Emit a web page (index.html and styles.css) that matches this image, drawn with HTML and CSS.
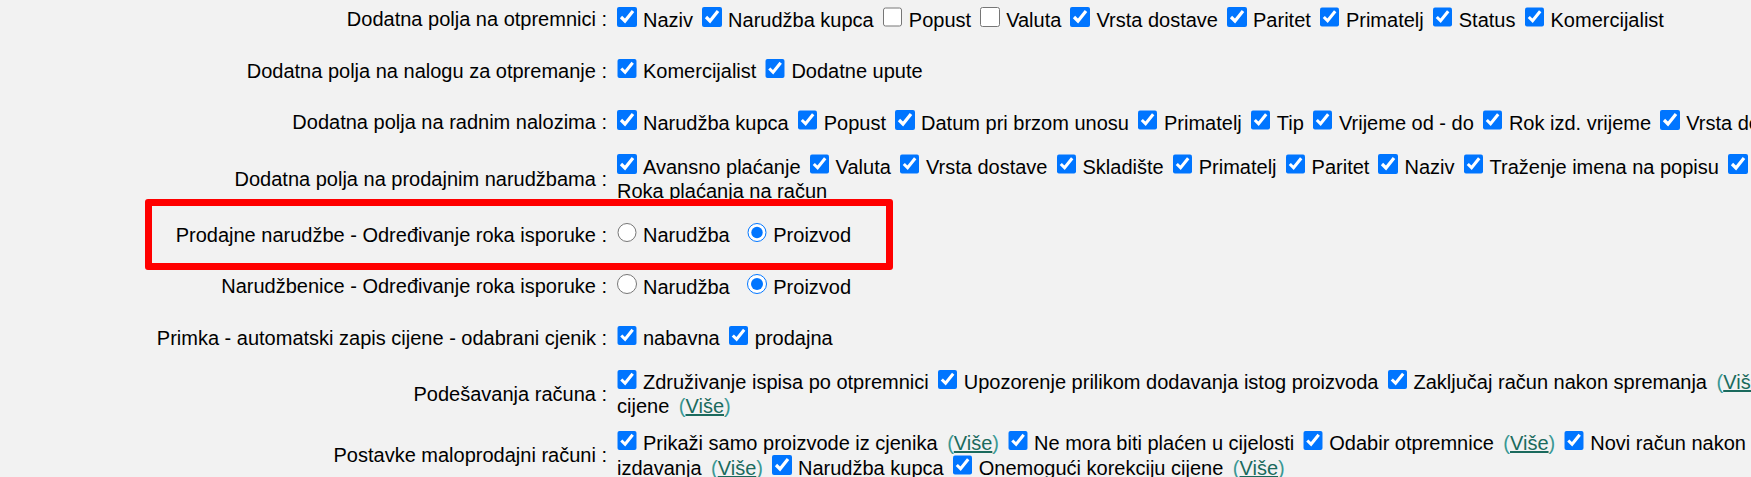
FILE: index.html
```html
<!DOCTYPE html>
<html lang="hr">
<head>
  <meta charset="UTF-8">
  <title>Postavke dokumenata</title>
  <link rel="stylesheet" href="styles.css">
</head>
<body>

  <div class="settings">

    <div class="row">
      <div class="lbl">Dodatna polja na otpremnici :</div>
      <div class="val">
        <label class="opt"><input type="checkbox" checked>Naziv</label>
        <label class="opt"><input type="checkbox" checked>Narudžba kupca</label>
        <label class="opt"><input type="checkbox">Popust</label>
        <label class="opt"><input type="checkbox">Valuta</label>
        <label class="opt"><input type="checkbox" checked>Vrsta dostave</label>
        <label class="opt"><input type="checkbox" checked>Paritet</label>
        <label class="opt"><input type="checkbox" checked>Primatelj</label>
        <label class="opt"><input type="checkbox" checked>Status</label>
        <label class="opt"><input type="checkbox" checked>Komercijalist</label>
      </div>
    </div>

    <div class="row">
      <div class="lbl">Dodatna polja na nalogu za otpremanje :</div>
      <div class="val">
        <label class="opt"><input type="checkbox" checked>Komercijalist</label>
        <label class="opt"><input type="checkbox" checked>Dodatne upute</label>
      </div>
    </div>

    <div class="row">
      <div class="lbl">Dodatna polja na radnim nalozima :</div>
      <div class="val">
        <label class="opt"><input type="checkbox" checked>Narudžba kupca</label>
        <label class="opt"><input type="checkbox" checked>Popust</label>
        <label class="opt"><input type="checkbox" checked>Datum pri brzom unosu</label>
        <label class="opt"><input type="checkbox" checked>Primatelj</label>
        <label class="opt"><input type="checkbox" checked>Tip</label>
        <label class="opt"><input type="checkbox" checked>Vrijeme od - do</label>
        <label class="opt"><input type="checkbox" checked>Rok izd. vrijeme</label>
        <label class="opt"><input type="checkbox" checked>Vrsta dostave</label>
      </div>
    </div>

    <div class="row">
      <div class="lbl">Dodatna polja na prodajnim narudžbama :</div>
      <div class="val">
        <label class="opt"><input type="checkbox" checked>Avansno plaćanje</label>
        <label class="opt"><input type="checkbox" checked>Valuta</label>
        <label class="opt"><input type="checkbox" checked>Vrsta dostave</label>
        <label class="opt"><input type="checkbox" checked>Skladište</label>
        <label class="opt"><input type="checkbox" checked>Primatelj</label>
        <label class="opt"><input type="checkbox" checked>Paritet</label>
        <label class="opt"><input type="checkbox" checked>Naziv</label>
        <label class="opt"><input type="checkbox" checked>Traženje imena na popisu</label>
        <label class="opt"><input type="checkbox" checked>Provjera Roka plaćanja na račun</label>
      </div>
    </div>

    <!-- označeno na slici -->
    <div class="row marked">
      <div class="lbl">Prodajne narudžbe - Određivanje roka isporuke :</div>
      <div class="val">
        <label class="opt radio"><input type="radio" name="rok_pn">Narudžba</label>
        <label class="opt radio"><input type="radio" name="rok_pn" checked>Proizvod</label>
      </div>
      <div class="mark"></div>
    </div>

    <div class="row">
      <div class="lbl">Narudžbenice - Određivanje roka isporuke :</div>
      <div class="val">
        <label class="opt radio"><input type="radio" name="rok_nb">Narudžba</label>
        <label class="opt radio"><input type="radio" name="rok_nb" checked>Proizvod</label>
      </div>
    </div>

    <div class="row">
      <div class="lbl">Primka - automatski zapis cijene - odabrani cjenik :</div>
      <div class="val">
        <label class="opt"><input type="checkbox" checked>nabavna</label>
        <label class="opt"><input type="checkbox" checked>prodajna</label>
      </div>
    </div>

    <div class="row">
      <div class="lbl">Podešavanja računa :</div>
      <div class="val">
        <label class="opt"><input type="checkbox" checked>Združivanje ispisa po otpremnici</label>
        <label class="opt"><input type="checkbox" checked>Upozorenje prilikom dodavanja istog proizvoda</label>
        <label class="opt"><input type="checkbox" checked>Zaključaj račun nakon spremanja <a class="more" href="#">(<span>Više</span>)</a></label>
        <label class="opt"><input type="checkbox" checked>Ispis cijene <a class="more" href="#">(<span>Više</span>)</a></label>
      </div>
    </div>

    <div class="row">
      <div class="lbl">Postavke maloprodajni računi :</div>
      <div class="val">
        <label class="opt"><input type="checkbox" checked>Prikaži samo proizvode iz cjenika <a class="more" href="#">(<span>Više</span>)</a></label>
        <label class="opt"><input type="checkbox" checked>Ne mora biti plaćen u cijelosti</label>
        <label class="opt"><input type="checkbox" checked>Odabir otpremnice <a class="more" href="#">(<span>Više</span>)</a></label>
        <label class="opt"><input type="checkbox" checked>Novi račun nakon fiskalnog izdavanja <a class="more" href="#">(<span>Više</span>)</a></label>
        <label class="opt"><input type="checkbox" checked>Narudžba kupca</label>
        <label class="opt"><input type="checkbox" checked>Onemogući korekciju cijene <a class="more" href="#">(<span>Više</span>)</a></label>
      </div>
    </div>

  </div>

</body>
</html>
```

FILE: styles.css
```css
html, body { overflow: hidden; }
body {
  margin: 0; background: #f2f2f2; color: #000;
  font-family: 'Liberation Sans', Arial, sans-serif; font-size: 20px;
  line-height: 24px;
}

/* table of settings: label column + options column */
.settings { width: 1860px; margin-top: -6.5px; }
.row {
  display: grid; grid-template-columns: 607px 1243px; column-gap: 10px;
  align-items: center; min-height: 51.5px; padding: 6.25px 0;
  box-sizing: border-box;
}
.lbl { text-align: right; white-space: nowrap; }

.opt input {
  width: 19.5px; height: 19.5px; margin: 0 6.5px 1px 0;
  vertical-align: baseline;
}
.opt + .opt input { margin-left: 3.5px; }
.opt.radio + .opt.radio input { margin-left: 12px; }

.more { color: #3a9894; text-decoration: none; margin-left: 4px; }
.more span { color: #1b6a5d; text-decoration: underline; }

/* red annotation frame */
.row.marked { position: relative; }
.mark {
  position: absolute; top: -10.5px; left: 145px; width: 748px; height: 71px;
  border: 7.5px solid #ff0000; border-radius: 3px; box-sizing: border-box;
  pointer-events: none;
}
```
